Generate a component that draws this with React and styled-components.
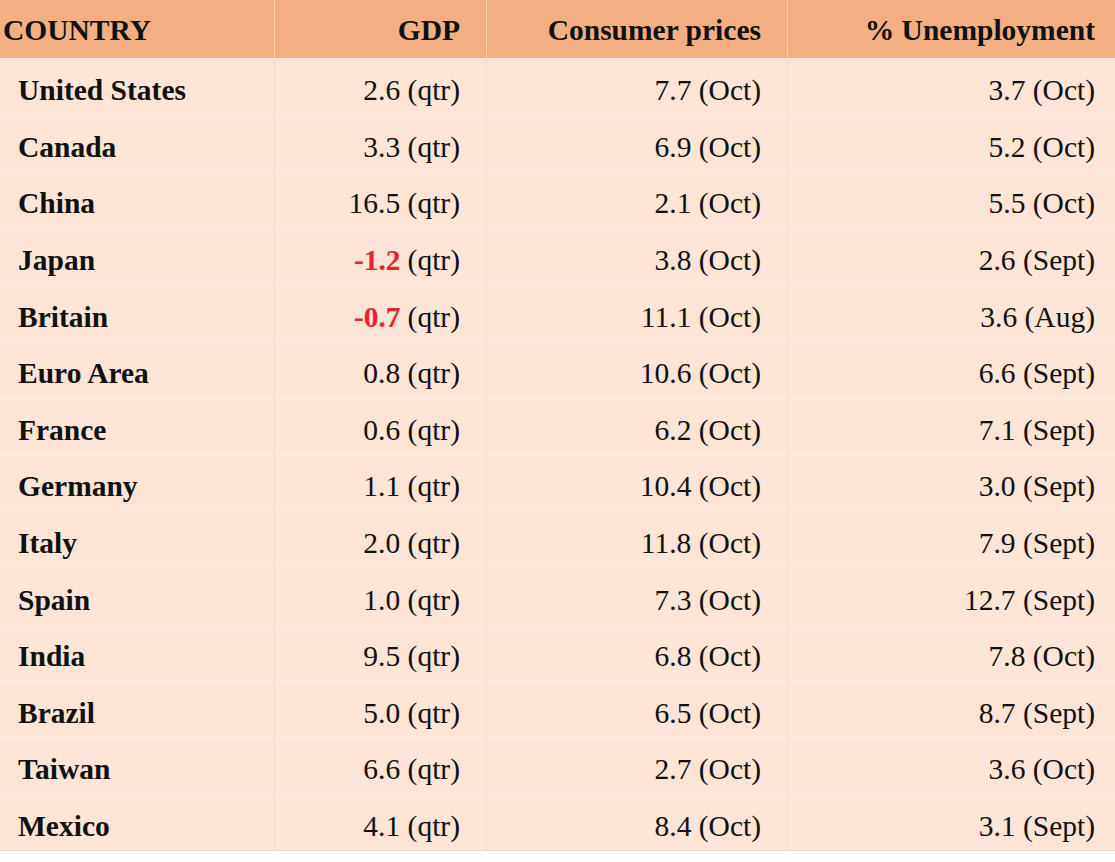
import styled, { createGlobalStyle } from 'styled-components';

const GlobalStyle = createGlobalStyle`
  html, body {
    margin: 0;
    padding: 0;
    background: #ffffff;
  }
  body {
    font-family: "Liberation Serif", "Times New Roman", serif;
  }
`;

const Table = styled.div`
  display: grid;
  grid-template-columns: 274px 212px 301px 328px;
  width: 1115px;
  font-family: "Liberation Serif", "Times New Roman", serif;
  font-size: 29.5px;
  color: #111;
  border-bottom: 1px solid #e6dcd6;
`;

const HeadCell = styled.div`
  height: 58px;
  display: flex;
  align-items: center;
  justify-content: ${p => (p.$left ? 'flex-start' : 'flex-end')};
  padding: ${p => (p.$left ? '3px 0 0 3px' : p.$last ? '3px 20px 0 0' : '3px 26px 0 0')};
  background: #f3af82;
  font-weight: 700;
  border-left: ${p => (p.$left ? 'none' : '1px solid #f8d2b8')};
  box-sizing: border-box;
`;

const Cell = styled.div`
  height: 56.6px;
  display: flex;
  align-items: center;
  justify-content: ${p => (p.$left ? 'flex-start' : 'flex-end')};
  padding: ${p => (p.$left ? '8px 0 0 18px' : p.$last ? '8px 20px 0 0' : '8px 26px 0 0')};
  background: #fce4d6;
  font-weight: ${p => (p.$left ? 700 : 400)};
  border-left: ${p => (p.$left ? 'none' : '1px solid #f1d9cb')};
  border-top: 1px solid #f7ebe3;
  box-sizing: border-box;
  white-space: nowrap;
`;

const Neg = styled.b`
  color: #e5252b;
  margin-right: 7px;
`;

const rows = [
  ['United States', '2.6', '7.7 (Oct)', '3.7 (Oct)'],
  ['Canada', '3.3', '6.9 (Oct)', '5.2 (Oct)'],
  ['China', '16.5', '2.1 (Oct)', '5.5 (Oct)'],
  ['Japan', '-1.2', '3.8 (Oct)', '2.6 (Sept)'],
  ['Britain', '-0.7', '11.1 (Oct)', '3.6 (Aug)'],
  ['Euro Area', '0.8', '10.6 (Oct)', '6.6 (Sept)'],
  ['France', '0.6', '6.2 (Oct)', '7.1 (Sept)'],
  ['Germany', '1.1', '10.4 (Oct)', '3.0 (Sept)'],
  ['Italy', '2.0', '11.8 (Oct)', '7.9 (Sept)'],
  ['Spain', '1.0', '7.3 (Oct)', '12.7 (Sept)'],
  ['India', '9.5', '6.8 (Oct)', '7.8 (Oct)'],
  ['Brazil', '5.0', '6.5 (Oct)', '8.7 (Sept)'],
  ['Taiwan', '6.6', '2.7 (Oct)', '3.6 (Oct)'],
  ['Mexico', '4.1', '8.4 (Oct)', '3.1 (Sept)'],
];

const Gdp = ({ value }) =>
  value.startsWith('-') ? (
    <span>
      <Neg>{value}</Neg>(qtr)
    </span>
  ) : (
    <span>{value} (qtr)</span>
  );

export default function App() {
  return (
    <>
      <GlobalStyle />
      <Table>
        <HeadCell $left>COUNTRY</HeadCell>
        <HeadCell>GDP</HeadCell>
        <HeadCell>Consumer prices</HeadCell>
        <HeadCell $last>% Unemployment</HeadCell>
        {rows.map(([country, gdp, cpi, unemp]) => (
          <>
            <Cell key={country + 'c'} $left>{country}</Cell>
            <Cell key={country + 'g'}><Gdp value={gdp} /></Cell>
            <Cell key={country + 'p'}>{cpi}</Cell>
            <Cell key={country + 'u'} $last>{unemp}</Cell>
          </>
        ))}
      </Table>
    </>
  );
}
